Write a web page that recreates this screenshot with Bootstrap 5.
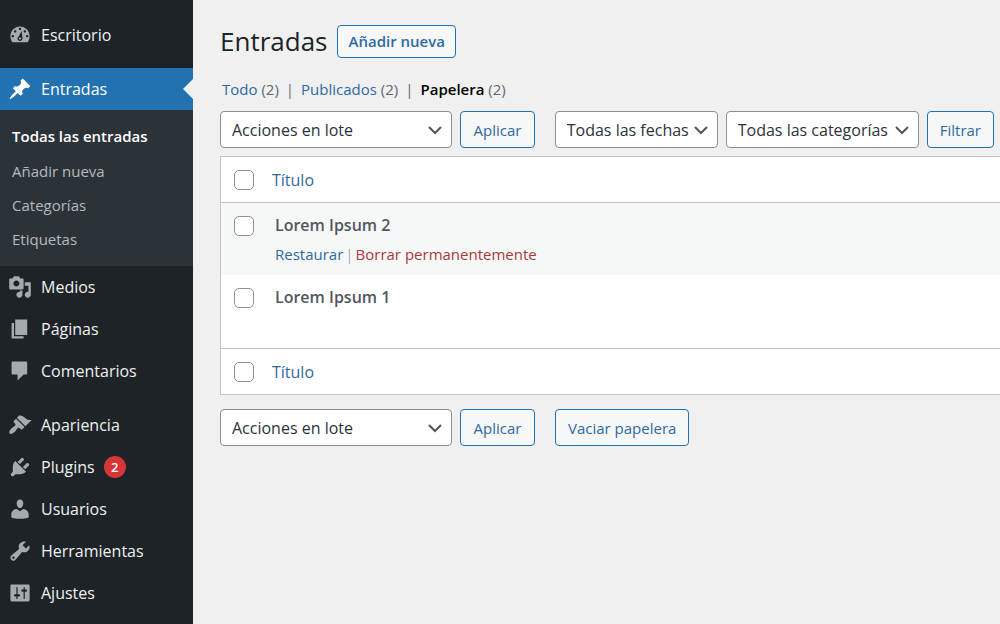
<!DOCTYPE html>
<html lang="es">
<head>
<meta charset="utf-8">
<meta name="viewport" content="width=device-width, initial-scale=1">
<title>Entradas</title>
<link href="https://cdn.jsdelivr.net/npm/bootstrap@5.3.0/dist/css/bootstrap.min.css" rel="stylesheet">
<style>
  body { font-family: "Open Sans", "Noto Sans", sans-serif; font-size: 15px; line-height: 20px; background: #f0f0f1; color: #3c434a; overflow-x: hidden; }
  a { color: #2f6a9f; text-decoration: none; }
  .side { width: 193px; background: #1d2327; padding-top: 14px; }
  .side .menu-link { height: 42px; padding: 0 8px; gap: 9px; color: #f0f0f1; font-size: 16px; }
  .side svg { width: 24px; height: 24px; fill: #a7aaad; flex: none; }
  .side .menu-link.current { background: #2271b1; color: #fff; }
  .side .current svg { fill: #fff; }
  .side .current::after { content: ""; position: absolute; right: 0; top: 11px; border: 10px solid transparent; border-left: 0; border-right-color: #f0f0f1; }
  .group-gap { margin-top: 12px; }
  .submenu { background: #2c3338; padding: 8px 12px 10px; }
  .submenu a { display: block; line-height: 34px; color: #b4b9be; }
  .submenu li:first-child a { color: #fff; font-weight: 600; line-height: 36px; }
  .count-bubble { width: 22px; height: 22px; background: #d63638; color: #fff; font-size: 13px; font-weight: 600; }
  .main-area { padding: 23px 0 24px 27px; }
  h1 { font-size: 26px; line-height: 36px; color: #1d2327; }
  .title-bar { gap: 10px; }
  .btn-wp { height: 37px; padding: 0 12px; font-size: 15px; line-height: 20px; color: #2f6a9f; border: 1px solid #2271b1; border-radius: 4px; background: #f6f7f7; white-space: nowrap; }
  .btn-add { height: 33px; padding: 0 10px; font-weight: 600; }
  .views { color: #646970; gap: 7px; margin: 20px 0 12px 2px; }
  .views .active-view { color: #000; font-weight: 600; }
  .form-select.wp-select { width: auto; height: 37px; padding: 0 26px 0 11px; font-size: 16px; line-height: 20px; color: #2c3338; border: 1px solid #8c8f94; border-radius: 4px; background-color: #fff; background-position: right 8px center; background-size: 16px 16px;
    background-image: url("data:image/svg+xml,%3Csvg xmlns='http://www.w3.org/2000/svg' viewBox='0 0 16 16'%3E%3Cpath fill='none' stroke='%2350575e' stroke-width='2' d='M2 5l6 6 6-6'/%3E%3C/svg%3E"); }
  .wp-select.bulk { width: 232px; }
  .wp-select.dates { width: 163px; }
  .wp-select.cats { width: 193px; }
  .btn-apply { width: 75px; }
  .btn-filter { margin-right: 6px; }
  .btn-empty { margin-left: 20px; }
  .posts { margin: 8px 0 14px; background: #fff; border: 1px solid #c3c4c7; border-right: 0; border-collapse: separate; border-spacing: 0; }
  .posts td, .posts th { padding: 0; font-weight: 400; text-align: left; }
  .posts th { font-size: 16px; }
  .posts thead th, .posts thead td { height: 46px; border-bottom: 1px solid #c3c4c7; }
  .posts tfoot th, .posts tfoot td { height: 46px; border-top: 1px solid #c3c4c7; }
  .posts tbody tr { height: 73px; vertical-align: top; }
  .posts tbody tr:first-child { height: 72px; background: #f6f7f7; }
  .posts .check-col { width: 51px; padding-left: 13px; }
  .posts tbody .check-col { padding-top: 13px; }
  .posts tbody .title-col { padding: 12px 0 0 3px; }
  .posts .form-check-input { display: block; float: none; width: 20px; height: 20px; margin: 0; border: 1px solid #8c8f94; border-radius: 5px; }
  .post-name { font-weight: 600; color: #50575e; font-size: 16px; }
  .row-actions { gap: 2px; margin-top: 9px; color: #a7aaad; }
  .row-actions .trash-link { color: #a83a3c; }
</style>
</head>
<body>
<div class="d-flex min-vh-100">
  <nav class="side flex-shrink-0" aria-label="Menú principal">
    <ul class="list-unstyled mb-0">
      <li><a class="menu-link d-flex align-items-center" href="#"><svg viewBox="0 0 20 20"><path d="M3.76 16h12.48c1.1-1.37 1.76-3.11 1.76-5 0-4.42-3.58-8-8-8s-8 3.58-8 8c0 1.89.66 3.63 1.76 5zM10 4c.55 0 1 .45 1 1s-.45 1-1 1-1-.45-1-1 .45-1 1-1zM6 6c.55 0 1 .45 1 1s-.45 1-1 1-1-.45-1-1 .45-1 1-1zm8 0c.55 0 1 .45 1 1s-.45 1-1 1-1-.45-1-1 .45-1 1-1zm-2.700 .7L12 12.300c.3 1.300-.7 2.700-2 2.700s-2.300-1.200-2-2.500c.1-.6.500-1.100 1-1.300zM4 10c.55 0 1 .45 1 1s-.45 1-1 1-1-.45-1-1 .45-1 1-1zm12 0c.55 0 1 .45 1 1s-.45 1-1 1-1-.45-1-1 .45-1 1-1zm-5 3c0-.55-.45-1-1-1s-1 .45-1 1 .45 1 1 1 1-.45 1-1z"/></svg>Escritorio</a></li>
      <li class="group-gap"><a class="menu-link current position-relative d-flex align-items-center" href="#" aria-current="page"><svg viewBox="0 0 20 20"><path d="M10.44 3.02l1.82-1.82 6.36 6.35-1.83 1.82c-1.05-.68-2.48-.57-3.41.36l-.75.75c-.92.93-1.04 2.35-.35 3.41l-1.83 1.82-2.41-2.41-2.8 2.79c-.42.42-3.38 2.71-3.8 2.29s1.86-3.39 2.28-3.81l2.79-2.79L4.1 9.36l1.83-1.82c1.05.69 2.48.57 3.4-.36l.75-.75c.93-.92 1.05-2.35.36-3.41z"/></svg>Entradas</a>
        <ul class="submenu list-unstyled">
          <li><a href="#">Todas las entradas</a></li>
          <li><a href="#">Añadir nueva</a></li>
          <li><a href="#">Categorías</a></li>
          <li><a href="#">Etiquetas</a></li>
        </ul></li>
      <li><a class="menu-link d-flex align-items-center" href="#"><svg viewBox="0 0 20 20"><path d="M13 11V4c0-.55-.45-1-1-1h-1.67L9 1H5L3.67 3H2c-.55 0-1 .45-1 1v7c0 .55.45 1 1 1h10c.55 0 1-.45 1-1zM7 4.5c1.38 0 2.5 1.12 2.5 2.5S8.38 9.5 7 9.5 4.5 8.38 4.5 7 5.62 4.5 7 4.5zM14 6h5v10.5c0 1.38-1.12 2.5-2.5 2.5S14 17.88 14 16.5s1.12-2.5 2.5-2.5c.17 0 .34.02.5.05V9h-3V6zm-4 8.05V13h2v3.5c0 1.38-1.12 2.5-2.5 2.5S7 17.88 7 16.5 8.12 14 9.5 14c.17 0 .34.02.5.05z"/></svg>Medios</a></li>
      <li><a class="menu-link d-flex align-items-center" href="#"><svg viewBox="0 0 20 20"><path d="M6 15V2h10v13H6zm-1 1h8v2H3V5h2v11z"/></svg>Páginas</a></li>
      <li><a class="menu-link d-flex align-items-center" href="#"><svg viewBox="0 0 20 20"><path d="M4 2h11c.55 0 1 .45 1 1v9c0 .55-.45 1-1 1h-2l-5 5v-5H4c-.55 0-1-.45-1-1V3c0-.55.45-1 1-1z"/></svg>Comentarios</a></li>
      <li class="group-gap"><a class="menu-link d-flex align-items-center" href="#"><svg viewBox="0 0 20 20"><path d="M14.48 11.06L7.41 3.99l1.5-1.5c.5-.56 2.3-.47 3.51.32 1.21.8 1.43 1.28 2.91 2.1 1.18.64 2.45 1.26 4.45.85zm-.71.71L6.7 4.7 4.93 6.47c-.39.39-.39 1.02 0 1.41l1.06 1.06c.39.39.39 1.03 0 1.42-.6.6-1.43 1.11-2.21 1.69-.35.26-.7.53-1.01.84C1.43 14.23.4 16.08 1.4 17.07c.99 1 2.84-.03 4.18-1.36.31-.31.58-.66.85-1.02.57-.78 1.08-1.61 1.69-2.21.39-.39 1.02-.39 1.41 0l1.06 1.06c.39.39 1.02.39 1.41 0z"/></svg>Apariencia</a></li>
      <li><a class="menu-link d-flex align-items-center" href="#"><svg viewBox="0 0 20 20"><path d="M13.11 4.36L9.87 7.6 8 5.73l3.24-3.24c.35-.34 1.05-.2 1.56.32.52.51.66 1.21.31 1.55zm-8 1.77l.91-1.12 9.01 9.01-1.19.84c-.71.71-2.63 1.16-3.82 1.16H6.14L4.9 17.26c-.59.59-1.54.59-2.12 0-.59-.58-.59-1.53 0-2.12l1.24-1.24v-3.88c0-1.13.4-3.19 1.09-3.89zm7.26 3.97l3.24-3.24c.34-.35 1.04-.21 1.55.31.52.51.66 1.21.31 1.55l-3.24 3.25z"/></svg>Plugins<span class="count-bubble rounded-circle d-inline-flex align-items-center justify-content-center">2</span></a></li>
      <li><a class="menu-link d-flex align-items-center" href="#"><svg viewBox="0 0 20 20"><path d="M10 9.25c-2.27 0-2.73-3.44-2.73-3.44C7 4.02 7.82 2 9.97 2c2.16 0 2.98 2.02 2.71 3.81 0 0-.41 3.44-2.68 3.44zm0 2.57L12.72 10c2.39 0 4.52 2.33 4.52 4.53v2.49s-3.65 1.13-7.24 1.13c-3.65 0-7.24-1.13-7.24-1.13v-2.49c0-2.25 1.94-4.48 4.47-4.48z"/></svg>Usuarios</a></li>
      <li><a class="menu-link d-flex align-items-center" href="#"><svg viewBox="0 0 20 20"><path d="M16.68 9.77c-1.34 1.34-3.3 1.67-4.95.99l-5.41 6.52c-.99.99-2.59.99-3.58 0s-.99-2.59 0-3.57l6.52-5.42c-.68-1.65-.35-3.61.99-4.95 1.28-1.28 3.12-1.62 4.72-1.06l-2.89 2.89 2.82 2.82 2.86-2.87c.53 1.58.18 3.39-1.08 4.65zM3.81 16.21c.4.39 1.04.39 1.43 0 .4-.4.4-1.04 0-1.43-.39-.4-1.03-.4-1.43 0-.39.39-.39 1.03 0 1.43z"/></svg>Herramientas</a></li>
      <li><a class="menu-link d-flex align-items-center" href="#"><svg viewBox="0 0 20 20"><path d="M18 16V4c0-.55-.45-1-1-1H3c-.55 0-1 .45-1 1v12c0 .55.45 1 1 1h14c.55 0 1-.45 1-1zM8 11h1c.55 0 1 .45 1 1s-.45 1-1 1H8v1.5c0 .28-.22.5-.5.5s-.5-.22-.5-.5V13H6c-.55 0-1-.45-1-1s.45-1 1-1h1V5.5c0-.28.22-.5.5-.5s.5.22.5.5V11zm5-2h-1c-.55 0-1-.45-1-1s.45-1 1-1h1V5.5c0-.28.22-.5.5-.5s.5.22.5.5V7h1c.55 0 1 .45 1 1s-.45 1-1 1h-1v5.5c0 .28-.22.5-.5.5s-.5-.22-.5-.5V9z"/></svg>Ajustes</a></li>
    </ul>
  </nav>

  <main class="main-area flex-grow-1">
    <div class="title-bar d-flex align-items-center">
      <h1 class="fw-normal m-0">Entradas</h1>
      <button type="button" class="btn btn-wp btn-add">Añadir nueva</button>
    </div>
    <div class="views d-flex">
      <span><a href="#">Todo</a> (2)</span><span>|</span>
      <span><a href="#">Publicados</a> (2)</span><span>|</span>
      <span><a class="active-view" href="#">Papelera</a> (2)</span>
    </div>
    <div class="d-flex">
      <select class="form-select wp-select bulk me-2" aria-label="Acciones en lote"><option>Acciones en lote</option></select>
      <button type="button" class="btn btn-wp btn-apply">Aplicar</button>
      <select class="form-select wp-select dates ms-auto me-2" aria-label="Filtrar por fecha"><option>Todas las fechas</option></select>
      <select class="form-select wp-select cats me-2" aria-label="Filtrar por categoría"><option>Todas las categorías</option></select>
      <button type="button" class="btn btn-wp btn-filter">Filtrar</button>
    </div>
    <table class="posts w-100">
      <thead><tr><td class="check-col"><input class="form-check-input" type="checkbox" aria-label="Seleccionar todo"></td><th scope="col"><a href="#">Título</a></th></tr></thead>
      <tbody>
        <tr><td class="check-col"><input class="form-check-input" type="checkbox" id="post2"></td>
          <td class="title-col"><label class="post-name" for="post2">Lorem Ipsum 2</label>
            <div class="row-actions d-flex"><a href="#">Restaurar</a><span>|</span><a class="trash-link" href="#">Borrar permanentemente</a></div></td></tr>
        <tr><td class="check-col"><input class="form-check-input" type="checkbox" id="post1"></td>
          <td class="title-col"><label class="post-name" for="post1">Lorem Ipsum 1</label></td></tr>
      </tbody>
      <tfoot><tr><td class="check-col"><input class="form-check-input" type="checkbox" aria-label="Seleccionar todo"></td><th scope="col"><a href="#">Título</a></th></tr></tfoot>
    </table>
    <div class="d-flex">
      <select class="form-select wp-select bulk me-2" aria-label="Acciones en lote"><option>Acciones en lote</option></select>
      <button type="button" class="btn btn-wp btn-apply">Aplicar</button>
      <button type="button" class="btn btn-wp btn-empty">Vaciar papelera</button>
    </div>
  </main>
</div>
<script src="https://cdn.jsdelivr.net/npm/bootstrap@5.3.0/dist/js/bootstrap.bundle.min.js"></script>
</body>
</html>
